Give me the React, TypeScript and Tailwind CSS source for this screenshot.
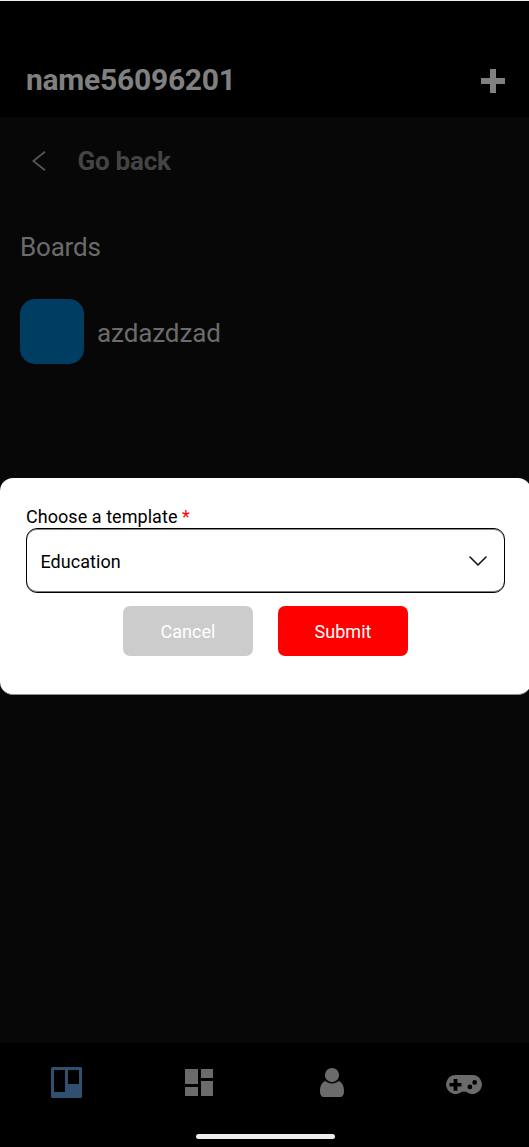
import React from "react";

function Header() {
  return (
    <header className="flex h-[117px] items-end justify-between border-t border-[#e8eef0] bg-black pr-6 pl-[26px] pb-6">
      <h1 className="mb-[-5px] text-[30px] leading-9 font-bold tracking-[-0.25px] whitespace-nowrap text-[#808080]">name56096201</h1>
      <button aria-label="Add board">
        <svg className="block h-6 w-6" viewBox="0 0 24 24" fill="#808080">
          <path d="M9 0h6v9h9v6h-9v9H9v-9H0V9h9z" />
        </svg>
      </button>
    </header>
  );
}

function BoardList() {
  return (
    <main className="flex-1 bg-[#070707] px-5">
      <button className="mt-[26px] flex h-9 items-center pl-3">
        <svg className="-mt-px h-5 w-[14px]" viewBox="0 0 14 20" fill="none" stroke="#585858" strokeWidth="1.8">
          <path d="M13 .8 1.3 10 13 19.200" />
        </svg>
        <span className="ml-[31.5px] text-[26px] font-bold tracking-[-0.25px] whitespace-nowrap text-[#444444]">Go back</span>
      </button>
      <h2 className="mt-[50px] text-[26px] leading-9 tracking-[-0.2px] text-[#6b6b6b]">Boards</h2>
      <div className="mt-[34px] flex items-center">
        <div className="h-[65px] w-16 rounded-[15px] bg-[#003d62]" />
        <span className="mt-0.5 ml-[13px] text-[26px] leading-9 tracking-[-0.1px] text-[#6b6b6b]">azdazdzad</span>
      </div>
    </main>
  );
}

function TabBar() {
  return (
    <nav className="grid h-[104px] grid-cols-4 bg-black pt-6">
      <a className="flex justify-center">
        <svg className="h-[31px] w-[31px]" viewBox="0 0 31 31">
          <path fill="#2f5070" fillRule="evenodd" d="M1 0h29l1 1v29l-1 1H1l-1-1V1zM3 3v22h11V3zM17 3v14h11V3z" />
        </svg>
      </a>
      <a className="flex justify-center pt-0.5 pl-[2px]">
        <svg className="h-[27px] w-7" viewBox="0 0 28 27" fill="#6b6b6b">
          <path d="M0 0h13v15H0zM16 0h12v9H16zM0 18h13v9H0zM16 12h12v15H16z" />
        </svg>
      </a>
      <a className="flex justify-center pt-px pl-[3px]">
        <svg className="h-[29px] w-6" viewBox="0 0 24 29" fill="#6b6b6b">
          <circle cx="12" cy="7.1" r="7.1" />
          <path d="M5.300 13c-3.500 1.300-5.300 5-5.300 9.700C0 27 1.400 29 4.300 29h15.400c2.900 0 4.300-2 4.300-6.300 0-4.700-1.800-8.400-5.300-9.700-3.800 3.300-9.600 3.300-13.400 0z" />
        </svg>
      </a>
      <a className="flex justify-center pt-2 pl-[3px]">
        <svg className="h-[19px] w-9" viewBox="0 0 36 19">
          <path fill="#6b6b6b" fillRule="evenodd" d="M9.500 0h17a9.500 9.500 0 1 1-6.300 16.700h-4.400A9.500 9.500 0 1 1 9.500 0zM7.600 4v4H3.500v3.600h4.100v4.100h3.800v-4.100h4.100V8h-4.100V4zM23.900 9.500a2.400 2.400 0 1 0 0 4.800 2.400 2.400 0 0 0 0-4.800zM28.700 5a2.400 2.400 0 1 0 0 4.800 2.400 2.400 0 0 0 0-4.800z" />
        </svg>
      </a>
    </nav>
  );
}

function TemplateDialog() {
  return (
    <section role="dialog" className="absolute top-[478px] left-0 h-[217px] w-[531px] rounded-[13px] border-b border-[#8b918f] bg-white px-[26px] pt-[27px] text-[18px] tracking-[0.05px] text-black">
      <label className="block leading-6">
        Choose a template <span className="text-[#ff0000]">*</span>
      </label>
      <div className="-mt-px flex h-[65px] items-center justify-between rounded-[11px] border border-black pr-[17px] pl-[13.5px] shadow-[inset_0_1px_0_#888,inset_0_-1px_0_#777]">
        <span className="mt-px">Education</span>
        <svg className="h-[10px] w-[18px]" viewBox="0 0 18 10" fill="none" stroke="#111111" strokeWidth="1.6" strokeLinecap="round" strokeLinejoin="round">
          <path d="m1 1 8 8 8-8" />
        </svg>
      </div>
      <div className="mt-[13px] flex justify-center gap-[25px]">
        <button className="h-[50px] w-[130px] rounded-[7px] bg-[#cccccc] text-white">Cancel</button>
        <button className="h-[50px] w-[130px] rounded-[7px] bg-[#ff0000] text-white">Submit</button>
      </div>
    </section>
  );
}

export default function App() {
  return (
    <div className="relative flex h-[1147px] w-full flex-col overflow-hidden bg-black font-['Roboto',sans-serif]">
      <Header />
      <BoardList />
      <TabBar />
      <TemplateDialog />
      <div className="absolute top-[1134px] left-[196px] h-[5px] w-[139px] rounded-full bg-[#ececec]" />
    </div>
  );
}
